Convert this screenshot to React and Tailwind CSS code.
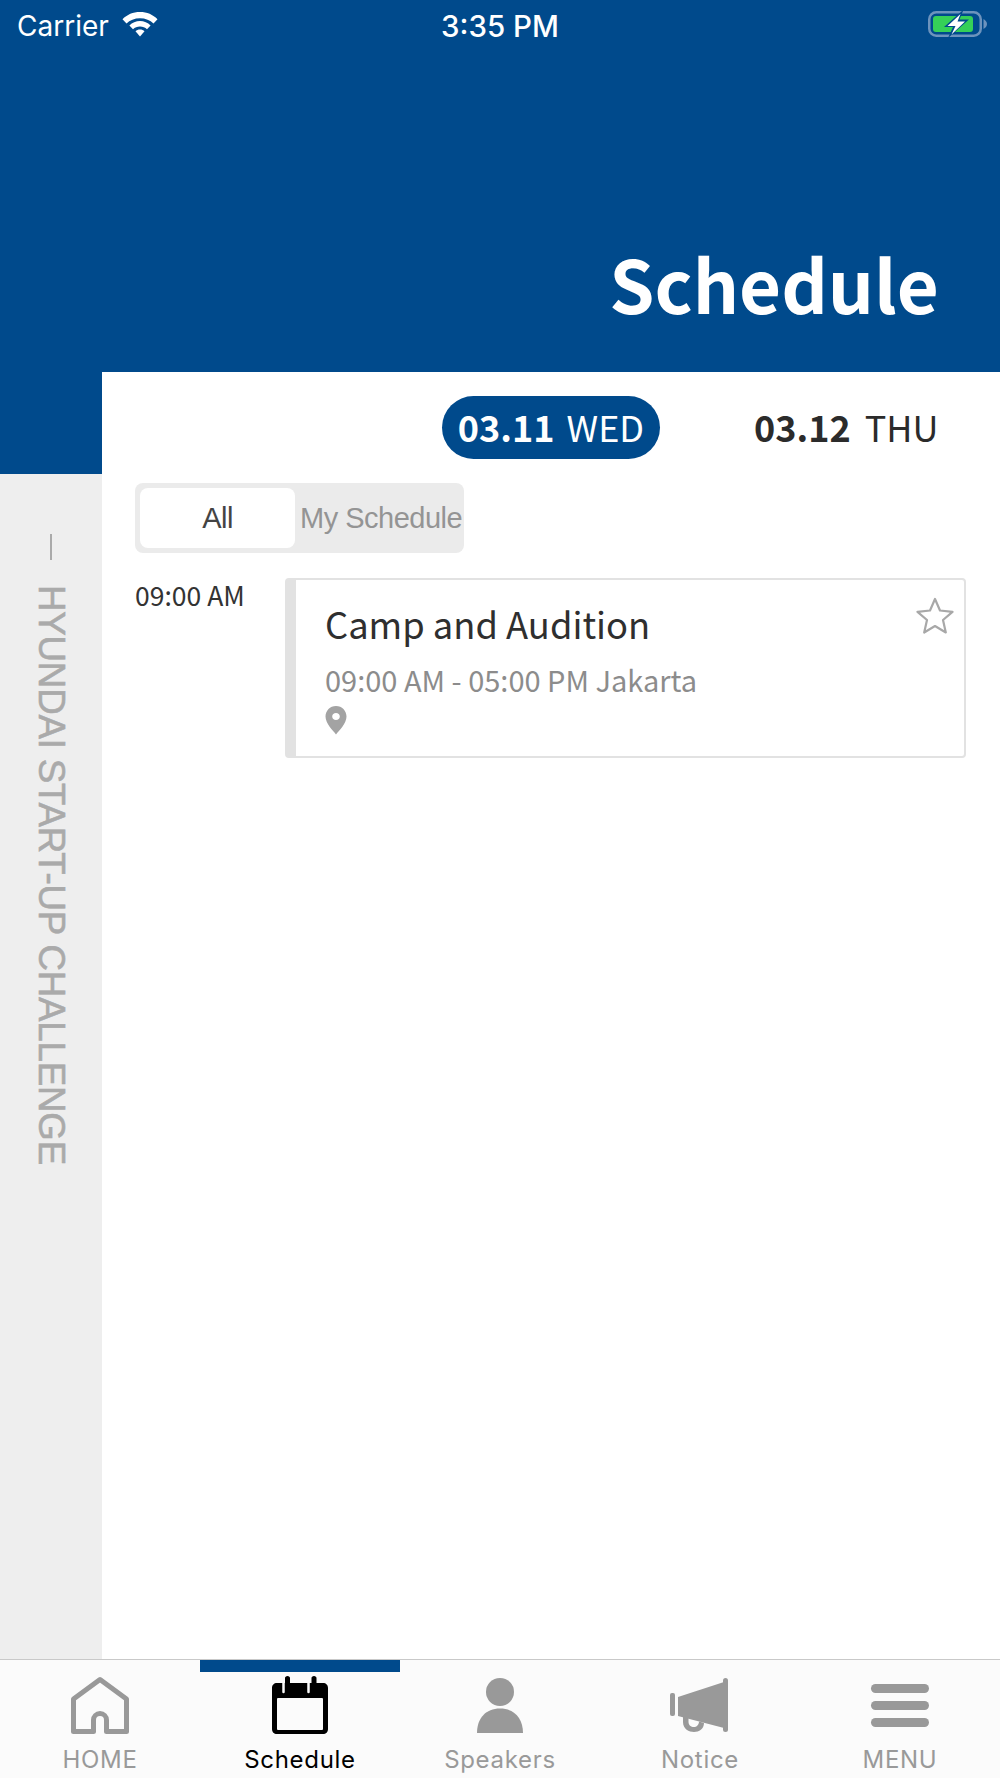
import React from "react";

const cjk = "font-['Noto_Sans_CJK_KR','Noto_Sans',sans-serif]";

function Wifi() {
  return (
    <svg className="mb-[4px]" width="36" height="26" viewBox="0 0 36 26" fill="white">
      <path d="M18 1C11 1 5 3.600 0.500 8.200L4.500 12.500C7.800 9.200 12.600 7.200 18 7.200C23.400 7.200 28.200 9.200 31.500 12.500L35.500 8.200C31 3.600 25 1 18 1Z" />
      <path d="M18 10C14 10 10.200 11.600 7.400 14.400L11 18.200C12.800 16.400 15.200 15.500 18 15.500C20.800 15.500 23.200 16.400 25 18.200L28.600 14.400C25.800 11.600 22 10 18 10Z" />
      <path d="M18 18.500C16.200 18.500 14.600 19.100 13.500 20.200L18 25.500L22.500 20.200C21.400 19.100 19.800 18.500 18 18.500Z" />
    </svg>
  );
}

function Battery() {
  return (
    <svg width="60" height="30" viewBox="0 0 60 30">
      <rect x="2.250" y="1.250" width="51.500" height="23.500" rx="7" fill="none" stroke="#6c93bd" strokeWidth="2.500" />
      <path d="M56.500 8C58.500 9 60 11 60 13C60 15 58.500 17 56.500 18Z" fill="#6c93bd" />
      <rect x="6" y="5" width="40" height="16" rx="3" fill="#35d058" />
      <path d="M35 0L17 16H26L21 27L42 8.500H32.500L36 0Z" fill="#004a8c" />
      <path d="M33.500 3L20.500 15H28.500L24.500 23.500L38 10.500H30.500Z" fill="white" />
    </svg>
  );
}

function StatusBar() {
  return (
    <div className="relative flex h-[52px] items-center justify-between pl-[17px] pr-[13px] font-['Inter',sans-serif] text-[28px] text-white">
      <div className="flex items-center gap-[13px]">
        <span className="leading-[40px]">Carrier</span>
        <Wifi />
      </div>
      <span className="absolute left-[441px] top-[6px] text-[29.500px] leading-[40px] font-medium">3:35 PM</span>
      <Battery />
    </div>
  );
}

function HomeIcon() {
  return (
    <svg width="60" height="60" viewBox="0 0 60 60" fill="none" stroke="#999999" strokeWidth="5" strokeLinejoin="round">
      <path d="M30 4.500L3.500 24V56.500H23.500V45A6.500 6.500 0 0 1 36.500 45V56.500H56.500V24Z" />
    </svg>
  );
}

function CalendarIcon() {
  return (
    <svg width="60" height="60" viewBox="0 0 60 60">
      <path d="M17.500 1C19 1 20 2 20 3V8H41.500V3C41.500 2 42.500 1 44 1C45.500 1 46.500 2 46.500 3V8H53C56 8 58 10 58 13V54C58 57 56 59 53 59H7C4 59 2 57 2 54V13C2 10 4 8 7 8H15V3C15 2 16 1 17.500 1Z" fill="black" />
      <path d="M13.500 8V17M38.500 8V17" stroke="#fbfbfb" strokeWidth="2.500" strokeLinecap="round" />
      <rect x="7" y="23" width="46" height="32" rx="1" fill="#fbfbfb" />
    </svg>
  );
}

function PersonIcon() {
  return (
    <svg width="60" height="60" viewBox="0 0 60 60" fill="#999999">
      <circle cx="30" cy="17" r="14" />
      <path d="M7 58C7 43 16 33.500 30 33.500C44 33.500 53 43 53 58Z" />
    </svg>
  );
}

function MegaphoneIcon() {
  return (
    <svg width="60" height="60" viewBox="0 0 60 60" fill="#999999">
      <rect x="0" y="18" width="5" height="23" rx="2" />
      <path d="M8 22L54 7V53L8 41Z" />
      <rect x="53" y="3" width="5" height="54" rx="2.500" />
      <path d="M13 41V47C13 54 19 57 24 57C29 57 34 54 34 48L29 46.500C29 50 26.500 52 24 52C21 52 18.500 50 18.500 47V41Z" />
    </svg>
  );
}

function MenuIcon() {
  return (
    <svg width="60" height="60" viewBox="0 0 60 60" fill="#999999">
      <rect x="1" y="9" width="58" height="9" rx="4.500" />
      <rect x="1" y="26" width="58" height="9" rx="4.500" />
      <rect x="1" y="43" width="58" height="9" rx="4.500" />
    </svg>
  );
}

const tabs = [
  { label: "HOME", icon: <HomeIcon /> },
  { label: "Schedule", icon: <CalendarIcon />, active: true },
  { label: "Speakers", icon: <PersonIcon /> },
  { label: "Notice", icon: <MegaphoneIcon /> },
  { label: "MENU", icon: <MenuIcon /> },
];

function TabBar() {
  return (
    <nav className="grid h-[119px] grid-cols-5 border-t-[1px] border-[#c9c9c9] bg-[#fbfbfb] font-['Inter',sans-serif]">
      {tabs.map((tab) => (
        <div key={tab.label} className="relative flex flex-col items-center pt-[15px]">
          {tab.active && <div className="absolute inset-x-0 top-0 h-[12px] bg-[#004a8c]" />}
          {tab.icon}
          <span className={"mt-[10px] text-[24px] leading-[30px] tracking-[0.7px] " + (tab.active ? "text-black" : "text-[#999999]")}>
            {tab.label}
          </span>
        </div>
      ))}
    </nav>
  );
}

function Sidebar() {
  return (
    <aside className="flex w-[102px] flex-col">
      <div className="h-[102px] bg-[#004a8c]" />
      <div className="flex flex-1 flex-col items-center bg-[#eeeeee] pt-[60px]">
        <div className="h-[26px] w-[2px] bg-[#aaaaaa]" />
        <span className="mt-[25px] font-['Liberation_Sans',sans-serif] text-[36.700px] leading-[40px] tracking-[-0.2px] whitespace-nowrap text-[#aaaaaa] [-webkit-text-stroke:0.6px_#aaaaaa] [writing-mode:vertical-rl]">
          HYUNDAI START-UP CHALLENGE
        </span>
      </div>
    </aside>
  );
}

function DateTabs() {
  return (
    <div className={"flex h-[63px] items-center justify-end gap-[94px] pr-[60px] text-[36px] leading-none " + cjk}>
      <div className="flex h-[63px] w-[218px] items-center justify-center gap-[12px] rounded-full bg-[#004a8c] pb-[4px] text-white">
        <b className="font-bold">03.11</b>
        <span>WED</span>
      </div>
      <div className="flex w-[186px] items-center gap-[14px] pb-[4px] text-[#2b2b2b]">
        <b className="font-bold">03.12</b>
        <span>THU</span>
      </div>
    </div>
  );
}

function Segment() {
  return (
    <div className="flex h-[70px] w-[329px] items-center rounded-[8px] bg-[#ebebeb] pl-[5px] font-['Liberation_Sans',sans-serif] text-[29px] tracking-[-0.5px]">
      <div className="flex h-[60px] w-[155px] items-center justify-center rounded-[8px] bg-white pt-[2px] text-[#444444]">All</div>
      <div className="ml-[5px] pt-[2px] whitespace-nowrap text-[#949494]">My Schedule</div>
    </div>
  );
}

function EventCard() {
  return (
    <div className="relative h-[180px] w-[681px] rounded-[4px] border-[2px] border-l-[11px] border-[#e2e2e2] bg-white pl-[29px] pt-[18px]">
      <div className="text-[36.300px] leading-[50px] text-[#2f2f2f]">Camp and Audition</div>
      <div className="mt-[11px] text-[29px] leading-[40px] text-[#8c8c8c]">09:00 AM - 05:00 PM Jakarta</div>
      <svg className="mt-[7px]" width="22" height="29" viewBox="0 0 22 29">
        <path fillRule="evenodd" d="M11 0C5 0 0.500 4.700 0.500 10.500C0.500 17.500 8 24.500 11 28.500C14 24.500 21.500 17.500 21.500 10.500C21.500 4.700 17 0 11 0ZM11 7C13.200 7 14.800 8.500 14.800 10.500C14.800 12.500 13.200 14 11 14C8.800 14 7.200 12.500 7.200 10.500C7.200 8.500 8.800 7 11 7Z" fill="#a3a3a3" />
      </svg>
      <svg className="absolute right-[10px] top-[17px]" width="38" height="38" viewBox="0 0 38 38" fill="none" stroke="#a8a8a8" strokeWidth="2.200" strokeLinejoin="round">
        <path d="M19 2L24 13.500L36.500 14.800L27 23L29.800 35.500L19 29L8.200 35.500L11 23L1.500 14.800L14 13.500Z" />
      </svg>
    </div>
  );
}

export default function App() {
  return (
    <div className="flex h-[1778px] w-[1000px] flex-col overflow-hidden bg-white">
      <header className="flex h-[372px] flex-col bg-[#004a8c]">
        <StatusBar />
        <h1 className={"mt-[181px] pr-[61px] text-right text-[72.500px] leading-[100px] font-bold text-white " + cjk}>Schedule</h1>
      </header>

      <div className="flex flex-1">
        <Sidebar />
        <main className={"flex-1 pt-[24px] " + cjk}>
          <DateTabs />
          <div className="mt-[24px] pl-[33px]">
            <Segment />
            <div className="mt-[25px] flex pr-[33px]">
              <div className="w-[150px] text-[26.500px] leading-[34px] text-[#333333]">09:00 AM</div>
              <EventCard />
            </div>
          </div>
        </main>
      </div>

      <TabBar />
    </div>
  );
}
